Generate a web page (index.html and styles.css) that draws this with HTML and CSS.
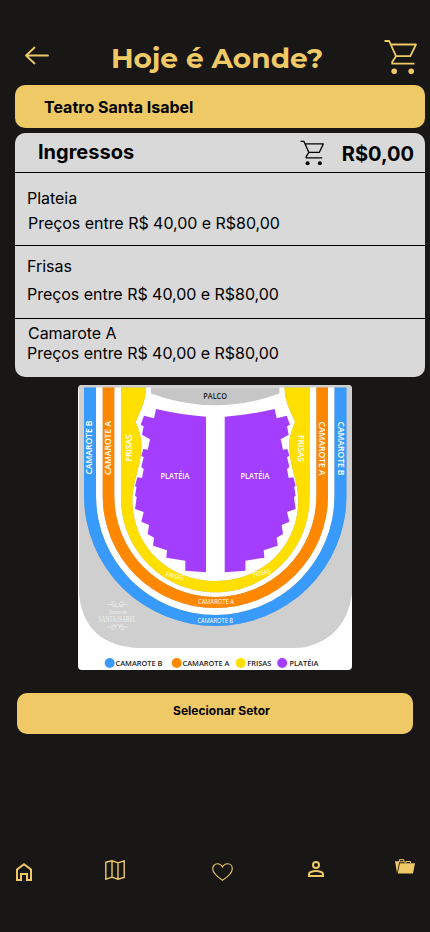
FILE: index.html
```html
<!DOCTYPE html>
<html lang="pt-BR">
<head>
<meta charset="utf-8">
<title>Hoje é Aonde?</title>
<link rel="stylesheet" href="styles.css">
</head>
<body>
<svg class="defs" aria-hidden="true">
  <symbol id="cart" viewBox="0 0 34 36">
    <path d="M.5 2H5.2L12 17.2H26.3L32 5.5H6.8M12 17.2L8.2 23V24.7H30.5" fill="none" stroke="currentColor" stroke-width="1.8" stroke-linejoin="round"/>
    <circle cx="10.2" cy="32.3" r="2.8" fill="currentColor"/><circle cx="27.2" cy="32.3" r="2.8" fill="currentColor"/>
  </symbol>
</svg>
<div class="screen">
  <header class="header">
    <svg class="back" viewBox="0 0 26 20"><path d="M24 9.5H2M10.5 1.5L2 9.5L10.5 17.5" /></svg>
    <h1 class="title">Hoje é Aonde?</h1>
    <svg class="cart-big"><use href="#cart"/></svg>
  </header>
  <div class="venue">Teatro Santa Isabel</div>
  <section class="tickets">
    <div class="tickets-head">
      <h2>Ingressos</h2>
      <svg class="cart-small"><use href="#cart"/></svg>
      <strong>R$0,00</strong>
    </div>
    <div class="sector plateia"><p>Plateia</p><p class="price">Preços entre R$ 40,00 e R$80,00</p></div>
    <div class="sector frisas"><p>Frisas</p><p class="price">Preços entre R$ 40,00 e R$80,00</p></div>
    <div class="sector camarote"><p>Camarote A</p><p class="price">Preços entre R$ 40,00 e R$80,00</p></div>
  </section>
  <svg class="map" viewBox="78 385 274 285">
    <defs>
      <path id="seats" d="M156 409Q182 415 206 416.7V572.3L185.3 570.7V560.7L166.3 557.7L167 550.3L153 545.7L154 537.7L147.7 534L149 525L141.3 521.7L143.7 512L135 509L136.7 497L135 496L136.5 487L135 486L137.3 477.3L142 478L143.7 469L141.3 467L143.7 457L141.3 456L143.3 449L147.7 449.7L150 439.3L142 434.7L143.7 426.3L140.7 424.7L144 415.7L154 418.3Z"/>
    </defs>
    <rect x="78" y="385" width="274" height="285" fill="#fff"/>
    <path d="M79 385H352V594Q346 637 306 647Q300 648 292 648H138Q84 645 79 594Z" fill="#cfcfcf"/>
    <path d="M84 387.5H346.5V496A131.2 130 0 0 1 84 496Z" fill="#fff"/>
    <g class="ring">
      <path d="M84 387.5H96V496A119.2 119 0 0 0 334.5 496V387.5H346.5V496A131.2 130 0 0 1 84 496Z" fill="#389bfb"/>
      <path d="M102.7 387.5H114.3V496A101 101 0 0 0 316.4 496V387.5H328V496A112.6 112 0 0 1 102.7 496Z" fill="#ff8800"/>
      <path d="M121 387.5H146C146 402 139 413 135.7 422C138 428 141.5 436 141.5 446C141.5 465 132.3 482 132.3 500C132.3 547 169 581 215.3 581S298.3 547 298.3 500C298.3 482 289.2 465 289.2 446C289.2 436 292.5 428 295 422C291.5 413 284.5 402 284.5 387.5H309.5V498C309.5 550 267 592.3 215.3 592.3S121 550 121 498Z" fill="#ffdf00"/>
    </g>
    <path d="M151 387.5H279.4V393.5Q215 417 151 393.5Z" fill="#c6c6c6"/>
    <use href="#seats" fill="#a43eff"/>
    <use href="#seats" fill="#a43eff" transform="translate(430.7 0) scale(-1 1)"/>
    <text class="dark" x="203.3" y="398.5" textLength="23.7" lengthAdjust="spacingAndGlyphs">PALCO</text>
    <g class="light">
      <text x="160.5" y="479" textLength="29" lengthAdjust="spacingAndGlyphs">PLATÉIA</text>
      <text x="240.5" y="479" textLength="29" lengthAdjust="spacingAndGlyphs">PLATÉIA</text>
      <text transform="translate(92.2 474.5) rotate(-90)" textLength="54">CAMAROTE B</text>
      <text transform="translate(111 475) rotate(-90)" textLength="54">CAMAROTE A</text>
      <text transform="translate(131.8 461.5) rotate(-90)" textLength="27">FRISAS</text>
      <text transform="translate(337.6 421.5) rotate(90)" textLength="54">CAMAROTE B</text>
      <text transform="translate(318.6 421.5) rotate(90)" textLength="54">CAMAROTE A</text>
      <text transform="translate(298 435) rotate(90)" textLength="27">FRISAS</text>
    </g>
    <g class="tiny">
      <text x="198" y="603.8" textLength="36" lengthAdjust="spacingAndGlyphs">CAMAROTE A</text>
      <text x="197.5" y="622.8" textLength="35.5" lengthAdjust="spacingAndGlyphs">CAMAROTE B</text>
      <text transform="translate(165.5 576.5) rotate(12)" textLength="18" lengthAdjust="spacingAndGlyphs">FRISAS</text>
      <text transform="translate(253.5 577.3) rotate(-14)" textLength="18" lengthAdjust="spacingAndGlyphs">FRISAS</text>
    </g>
    <g class="brand">
      <text class="brand-small" x="109" y="614" textLength="18" lengthAdjust="spacingAndGlyphs">Teatro de</text>
      <text x="98.5" y="622" textLength="37.5" lengthAdjust="spacingAndGlyphs">SANTA ISABEL</text>
      <path d="M111 602.5C113.5 600.5 117 603 115 606C113.5 607.5 111.5 606.5 112 605M124 602.5C121.5 600.5 118 603 120 606C121.5 607.5 123.5 606.5 123 605M107.5 604.5Q113 603 117.5 607Q122 603 127.5 604.5"/>
      <path d="M111 629C113.5 631 117 628.500 115 625.500C113.500 624 111.500 625 112 626.500M124 629C121.500 631 118 628.500 120 625.500C121.500 624 123.500 625 123 626.500M107.500 627Q113 628.500 117.500 624.500Q122 628.500 127.500 627"/>
    </g>
    <g>
      <circle cx="109.7" cy="663" r="5" fill="#389bfb"/><circle cx="176.7" cy="663" r="5" fill="#ff8800"/>
      <circle cx="240.8" cy="663" r="5" fill="#ffdf00"/><circle cx="282.2" cy="663" r="5" fill="#a43eff"/>
    </g>
    <g class="legend">
      <text x="115.5" y="665.8" textLength="47" lengthAdjust="spacingAndGlyphs">CAMAROTE B</text>
      <text x="182.5" y="665.8" textLength="47" lengthAdjust="spacingAndGlyphs">CAMAROTE A</text>
      <text x="247.3" y="665.8" textLength="24" lengthAdjust="spacingAndGlyphs">FRISAS</text>
      <text x="289.5" y="665.8" textLength="29" lengthAdjust="spacingAndGlyphs">PLATÉIA</text>
    </g>
  </svg>
  <button class="select">Selecionar Setor</button>
  <nav class="nav">
    <svg class="home" viewBox="0 0 16 18"><path d="M1 17V6.500L8 1.300L15 6.500V17H11V11H5V17Z" fill="none" stroke="currentColor" stroke-width="2"/></svg>
    <svg class="mapicon" viewBox="0 0 20 20"><path d="M.8 2.3L7 .8L13 2.8L19.2 .8V17.5L13 19.2L7 17.2L.8 19.2ZM7 .8V17.2M13 2.8V19.2" fill="none" stroke="currentColor" stroke-width="1.4"/></svg>
    <svg class="heart" viewBox="0 0 21 18"><path d="M10.5 17.3C7 15 .7 10.5 .7 5.8C.7 3 2.8 .8 5.4 .8C7.8 .8 9.500 2 10.5 4C11.5 2 13.2 .8 15.6 .8C18.2 .8 20.3 3 20.3 5.8C20.3 10.5 14 15 10.5 17.3Z" fill="none" stroke="currentColor" stroke-width="1.1"/></svg>
    <svg class="person" viewBox="0 0 16 16"><circle cx="8" cy="4" r="3" fill="none" stroke="currentColor" stroke-width="2"/><path d="M1 15V13C1 11 5 10 8 10S15 11 15 13V15Z" fill="none" stroke="currentColor" stroke-width="2"/></svg>
    <svg class="folder" viewBox="0 0 20 15"><path d="M4.900 4.200H20L18 14.500H2.700Z" fill="currentColor"/><path d="M0 2.300H9.500V3.200H4.200L2 14Z" fill="currentColor"/><path d="M4.500 2.500V.6H8.800V2.500M11 4V2.500H15.500V4M9 3H11" fill="none" stroke="currentColor"/></svg>
  </nav>
</div>
</body>
</html>
```
FILE: styles.css
```css
* { box-sizing: border-box; }
body { margin: 0; background: #181715; }
h1, h2, p { margin: 0; }
.defs { display: none; }
.screen {
  width: 430px; height: 932px; display: flex; flex-direction: column;
  background: #181715; color: #000; font-family: Inter, "Liberation Sans", sans-serif;
}
.header { display: flex; align-items: flex-start; height: 85px; padding: 39px 12px 0 24px; color: #efc966; }
.back { width: 26px; height: 20px; margin-top: 7px; fill: none; stroke: currentColor; stroke-width: 1.8; stroke-linecap: round; stroke-linejoin: round; }
.title { margin-left: 61px; font: 700 28px/38px Montserrat, Lato, sans-serif; white-space: nowrap; }
.cart-big { width: 34px; height: 36px; margin-left: auto; }
.venue {
  height: 43px; margin: 0 5px 5px 15px; padding-left: 29px; border-radius: 10px;
  background: #efc966; font-size: 16px; font-weight: 700; line-height: 44px;
}
.tickets { height: 244px; margin: 0 5px 8px 15px; border-radius: 10px; background: #d9d9d9; font-size: 16px; line-height: 20px; letter-spacing: -.035px; }
.tickets-head { display: flex; height: 39px; padding: 0 11px 0 23px; font-size: 20px; line-height: 39px; letter-spacing: 0; }
.tickets-head h2 { font-size: 20px; font-weight: 700; }
.tickets-head strong { line-height: 42px; }
.cart-small { width: 25px; height: 26px; margin: 7px 17px 0 auto; }
.sector { height: 73px; padding-left: 12px; border-top: 1px solid #000; }
.plateia { padding-top: 15px; }
.plateia .price { padding: 5px 0 0 1px; }
.frisas { padding-top: 10px; }
.frisas .price { padding-top: 8px; }
.camarote { height: 59px; padding-top: 4px; }
.camarote p:first-child { padding-left: 1px; }
.map { width: 274px; height: 285px; margin-left: 78px; border-radius: 4px; font-family: "Open Sans", "Noto Sans", sans-serif; }
.ring { filter: drop-shadow(0 .5px .7px #0005); }
.dark { font-size: 8.2px; font-weight: 600; fill: #222; }
.light { font-size: 8.6px; font-weight: 600; fill: #fff; }
.tiny { font-size: 6.6px; font-weight: 500; fill: #fff; }
.legend { font-size: 7.6px; font-weight: 600; fill: #222; }
.brand { font-family: "Liberation Serif", serif; font-size: 8px; fill: #f2f2f2; }
.brand-small { font-size: 6px; }
.brand path { fill: none; stroke: #eee; stroke-width: .8; }
.select {
  height: 41px; margin: 23px 17px 0; padding: 0 0 5px 13px; border: 0; border-radius: 10px;
  background: #efc966; color: #000; font: 700 12px/16px Inter, sans-serif;
}
.nav { display: flex; align-items: flex-start; margin-top: 125px; padding: 0 15px 0 16px; color: #efc966; }
.home { width: 16px; height: 18px; margin-top: 4px; }
.mapicon { width: 20px; height: 20px; margin: 1px 0 0 73px; }
.heart { width: 21px; height: 18px; margin: 4px 0 0 87px; }
.person { width: 16px; height: 16px; margin: 2px 0 0 75px; }
.folder { width: 20px; height: 15px; margin: 0 0 0 71px; }
```
